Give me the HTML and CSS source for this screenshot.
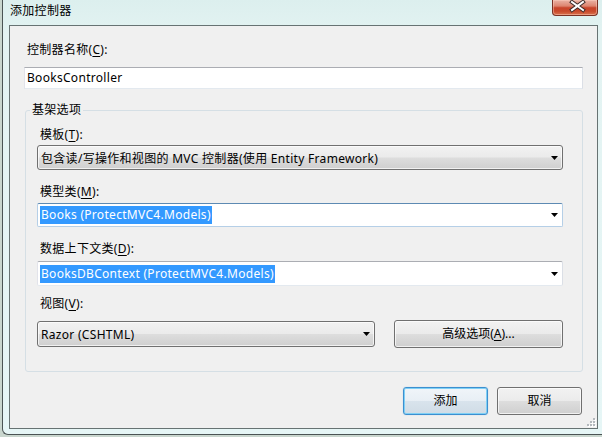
FILE: index.html
```html
<!DOCTYPE html>
<html lang="zh-CN">
<head>
<meta charset="utf-8">
<title>添加控制器</title>
<link rel="stylesheet" href="styles.css">
</head>
<body>
<div class="window">
  <div class="titlebar">
    <span class="title">添加控制器</span>
    <div class="close">
      <svg width="44" height="15" viewBox="0 0 44 15">
        <path d="M19 2 L30 10 M30 2 L19 10" stroke="#3b2a28" stroke-width="4" stroke-linecap="square" fill="none"/>
        <path d="M19 2 L30 10 M30 2 L19 10" stroke="#ffffff" stroke-width="2" stroke-linecap="square" fill="none"/>
      </svg>
    </div>
  </div>
  <div class="client">
    <div class="label first">控制器名称(<u>C</u>):</div>
    <div class="textbox">BooksController</div>
    <fieldset class="group">
      <legend>基架选项</legend>
      <div class="group-body">
        <div class="label">模板(<u>T</u>):</div>
        <div class="combo dropdown c1">
          <span class="value">包含读/写操作和视图的 MVC 控制器(使用 Entity Framework)</span>
          <svg class="arrow" width="7" height="4" viewBox="0 0 7 4"><polygon points="0,0 7,0 3.5,4" fill="#000"/></svg>
        </div>
        <div class="label l2">模型类(<u>M</u>):</div>
        <div class="combo edit focused c2">
          <span class="sel">Books (ProtectMVC4.Models)</span>
          <svg class="arrow" width="7" height="4" viewBox="0 0 7 4"><polygon points="0,0 7,0 3.5,4" fill="#000"/></svg>
        </div>
        <div class="label l3">数据上下文类(<u>D</u>):</div>
        <div class="combo edit c3">
          <span class="sel">BooksDBContext (ProtectMVC4.Models)</span>
          <svg class="arrow" width="7" height="4" viewBox="0 0 7 4"><polygon points="0,0 7,0 3.5,4" fill="#000"/></svg>
        </div>
        <div class="label l4">视图(<u>V</u>):</div>
        <div class="row">
          <div class="combo dropdown view">
            <span class="value">Razor (CSHTML)</span>
            <svg class="arrow" width="7" height="4" viewBox="0 0 7 4"><polygon points="0,0 7,0 3.5,4" fill="#000"/></svg>
          </div>
          <button class="btn advanced">高级选项(<u>A</u>)...</button>
        </div>
      </div>
    </fieldset>
    <div class="actions">
      <button class="btn default">添加</button>
      <button class="btn">取消</button>
    </div>
    <svg class="grip" width="9" height="9" viewBox="0 0 9 9">
      <rect x="7" y="1" width="2" height="2" fill="#fff"/>
      <rect x="4" y="4" width="2" height="2" fill="#fff"/>
      <rect x="7" y="4" width="2" height="2" fill="#fff"/>
      <rect x="1" y="7" width="2" height="2" fill="#fff"/>
      <rect x="4" y="7" width="2" height="2" fill="#fff"/>
      <rect x="7" y="7" width="2" height="2" fill="#fff"/>
      <rect x="6" y="0" width="2" height="2" fill="#b4b9bd"/>
      <rect x="3" y="3" width="2" height="2" fill="#b4b9bd"/>
      <rect x="6" y="3" width="2" height="2" fill="#b4b9bd"/>
      <rect x="0" y="6" width="2" height="2" fill="#b4b9bd"/>
      <rect x="3" y="6" width="2" height="2" fill="#b4b9bd"/>
      <rect x="6" y="6" width="2" height="2" fill="#b4b9bd"/>
    </svg>
  </div>
</div>
</body>
</html>
```
FILE: styles.css
```css
* { box-sizing: border-box; }
html, body { margin: 0; padding: 0; }
body {
  width: 602px;
  height: 437px;
  overflow: hidden;
  background: #c9d6ce;
  font-family: "Noto Sans", "Noto Sans CJK SC", sans-serif;
  font-size: 12px;
  letter-spacing: 0.3px;
  color: #000;
}
u { text-decoration-thickness: 1px; text-underline-offset: 2px; }

.window {
  margin-left: 2px;
  width: 600px;
  height: 435px;
  border-left: 1px solid #4a5454;
  border-bottom: 1px solid #4a5454;
  border-bottom-left-radius: 6px;
  padding: 0 4px 5px 6px;
  background: linear-gradient(180deg, #dcefee 0%, #e3f3f2 8%, #e6f6f6 100%);
  display: flex;
  flex-direction: column;
}
.titlebar {
  height: 25px;
  flex: none;
  display: flex;
  align-items: flex-start;
  justify-content: space-between;
}
.title {
  padding-left: 1px;
  margin-top: 3px;
  line-height: 16px;
}
.close {
  width: 46px;
  height: 16px;
  border: 1px solid #7a3124;
  border-top: none;
  border-radius: 0 0 4px 4px;
  background: linear-gradient(180deg, #eab2a4 0%, #dd8570 40%, #c8442a 52%, #c94a2c 75%, #d9744f 100%);
  box-shadow: inset 0 0 0 1px rgba(255, 210, 195, 0.45);
  display: flex;
}
.close svg { display: block; }

.client {
  position: relative;
  flex: 1;
  border: 1px solid #677373;
  background: #f0f0f0;
  padding: 0 14px;
  display: flex;
  flex-direction: column;
}
.label {
  line-height: 16px;
  padding-left: 3px;
  white-space: nowrap;
}
.label.first { margin-top: 16px; }
.textbox {
  margin-top: 9px;
  height: 22px;
  background: #fff;
  border: 1px solid;
  border-color: #abadb3 #dbdfe6 #e3e9ef #e2e3ea;
  padding: 0 2px;
  line-height: 20px;
}

.group {
  margin: 13px 0 0 1px;
  padding: 0;
  border: 1px solid #d5dfe5;
  border-radius: 3px;
  min-width: 0;
}
.group legend {
  margin-left: 4px;
  padding: 0 2px;
  line-height: 16px;
}
.group-body {
  padding: 9px 19px 23px 11px;
  display: flex;
  flex-direction: column;
}
.group-body .l2 { margin-top: 14px; }
.group-body .l3 { margin-top: 14px; }
.group-body .l4 { margin-top: 10px; }

.combo {
  display: flex;
  align-items: center;
  height: 25px;
  border: 1px solid #707070;
  border-radius: 3px;
  white-space: nowrap;
}
.combo .arrow { margin-left: auto; margin-right: 4px; flex: none; display: block; }
.dropdown {
  padding-left: 3px;
  background: linear-gradient(180deg, #f2f2f2 0%, #ebebeb 48%, #dddddd 52%, #cfcfcf 100%);
  box-shadow: inset 0 0 0 1px rgba(255, 255, 255, 0.7);
}
.c1 { margin-top: 2px; }
.edit {
  background: #fff;
  border-radius: 2px;
  padding-left: 2px;
  border-color: #abadb3 #dbdfe6 #e3e9ef #e2e3ea;
}
.edit.focused {
  border-color: #5d8ab3 #b5cfe7 #b5cfe7 #b5cfe7;
}
.c2 { margin-top: 3px; height: 24px; }
.c3 { margin-top: 4px; height: 25px; }
.sel {
  background: #3399ff;
  color: #fff;
  padding: 0 1px;
  line-height: 18px;
}

.row {
  margin-top: 8px;
  display: flex;
  align-items: center;
  justify-content: space-between;
  height: 28px;
}
.view { width: 338px; height: 26px; }

.btn {
  font: inherit;
  color: #000;
  height: 28px;
  border: 1px solid #707070;
  border-radius: 3px;
  background: linear-gradient(180deg, #f2f2f2 0%, #ebebeb 48%, #dddddd 52%, #cfcfcf 100%);
  box-shadow: inset 0 0 0 1px rgba(255, 255, 255, 0.7);
  padding: 0;
  line-height: 16px;
}
.advanced { width: 169px; }

.actions {
  margin-top: 15px;
  margin-right: 1px;
  display: flex;
  justify-content: flex-end;
  gap: 9px;
}
.actions .btn { width: 85px; }
.btn.default {
  border-color: #3c8fd0;
  background: linear-gradient(180deg, #f0f5f9 0%, #e8eff5 48%, #d8e3ec 52%, #d0dce6 100%);
  box-shadow: inset 0 0 0 1px #7fd0f5, 0 0 1px rgba(60, 160, 230, 0.5);
}
.grip {
  position: absolute;
  right: 1px;
  bottom: 1px;
  display: block;
}
```
